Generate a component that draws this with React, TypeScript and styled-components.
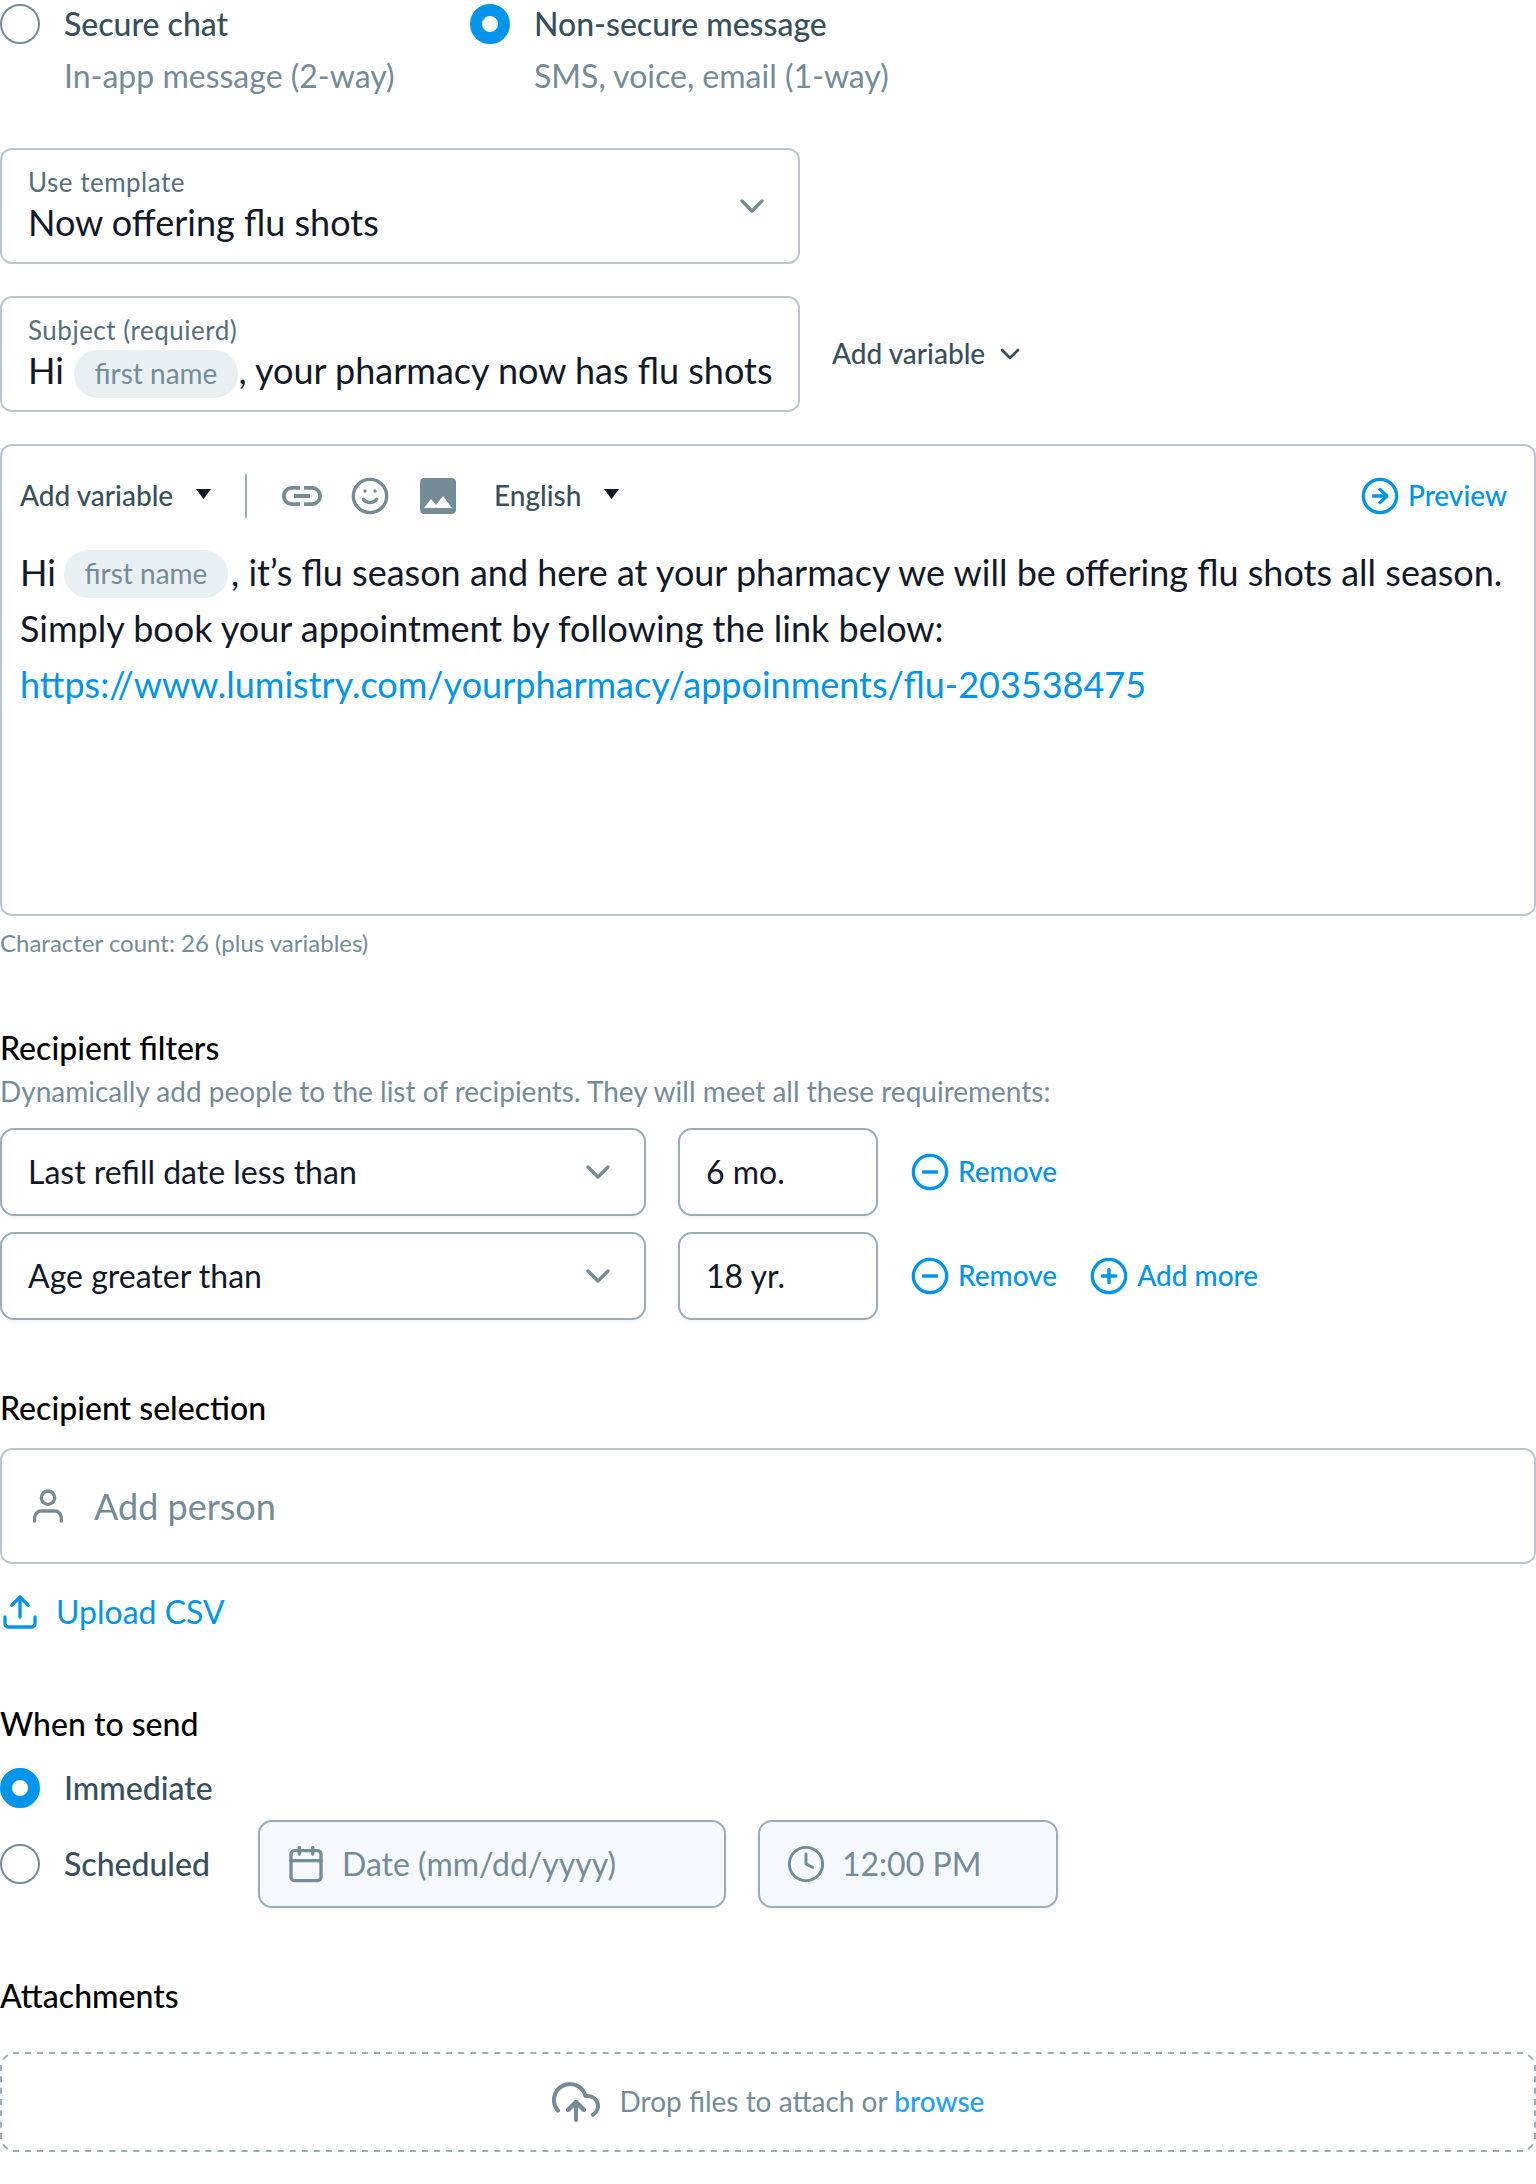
import React from "react";
import styled, { createGlobalStyle } from "styled-components";
import {
  FiArrowRightCircle,
  FiCalendar,
  FiChevronDown,
  FiClock,
  FiMinusCircle,
  FiPlusCircle,
  FiSmile,
  FiUpload,
  FiUploadCloud,
  FiUser,
} from "react-icons/fi";

const color = {
  blue: "#0094eb",
  browse: "#23a0f5",
  ink: "#111827",
  dark: "#37505c",
  label: "#546e7a",
  muted: "#748b98",
  line: "#bac7ce",
  lineStrong: "#9aaeba",
  pill: "#e8f0f4",
  disabled: "#f5f8fd",
};

const GlobalStyle = createGlobalStyle`
  *, *::before, *::after { box-sizing: border-box; }
  body {
    margin: 0;
    background: #fff;
    color: ${color.ink};
    font-family: Lato, "Liberation Sans", sans-serif;
    font-size: 32px;
    line-height: 48px;
  }
  svg { display: block; flex: none; }
`;

const Form = styled.main`
  display: flex;
  flex-direction: column;
  width: 1536px;
`;

const Stack = styled.div<{ $gap: number; $top?: number }>`
  display: flex;
  flex-direction: column;
  gap: ${(p) => p.$gap}px;
  margin-top: ${(p) => p.$top ?? 0}px;
`;

const Row = styled.div<{ $gap: number }>`
  display: flex;
  align-items: center;
  gap: ${(p) => p.$gap}px;
`;

const TypeChoices = styled.div`
  display: grid;
  grid-template-columns: 470px 1fr;
`;

const RadioRow = styled.label`
  display: grid;
  grid-template-columns: 40px auto;
  column-gap: 24px;
  row-gap: 4px;
  align-items: center;
  justify-content: start;
`;

const RadioDot = styled.span<{ $checked?: boolean }>`
  width: 40px;
  height: 40px;
  border-radius: 50%;
  border: ${(p) => (p.$checked ? `12px solid ${color.blue}` : `2px solid ${color.muted}`)};
  background: #fff;
`;

const RadioLabel = styled.span`
  color: ${color.dark};
  font-weight: 500;
  white-space: nowrap;
`;

const RadioHint = styled.span`
  grid-column: 2;
  color: ${color.muted};
  white-space: nowrap;
`;

const Field = styled.div`
  display: flex;
  align-items: center;
  justify-content: space-between;
  width: 800px;
  height: 116px;
  padding: 0 26px;
  border: 2px solid ${color.line};
  border-radius: 12px;
`;

const FieldText = styled.div`
  display: flex;
  flex-direction: column;
  padding-top: 4px;
`;

const FieldLabel = styled.span`
  color: ${color.label};
  font-size: 26px;
  line-height: 28px;
  letter-spacing: 0.5px;
`;

const FieldValue = styled.span`
  display: flex;
  align-items: center;
  height: 52px;
  font-size: 36px;
  line-height: 52px;
  white-space: pre;
`;

const Greeting = styled.span<{ $width: number }>`
  width: ${(p) => p.$width}px;
`;

const Pill = styled.span<{ $drop: number; $after: number }>`
  display: inline-flex;
  justify-content: center;
  width: 164px;
  height: 48px;
  margin: ${(p) => p.$drop * 2}px ${(p) => p.$after}px 0 0;
  padding-top: 4px;
  border-radius: 24px;
  background: ${color.pill};
  color: ${color.muted};
  font-size: 28px;
  line-height: 38px;
`;

const Chevron = styled(FiChevronDown)<{ $size?: number; $tone?: string }>`
  width: ${(p) => p.$size ?? 40}px;
  height: ${(p) => p.$size ?? 40}px;
  color: ${(p) => p.$tone ?? color.muted};
`;

const VariableButton = styled.span`
  display: flex;
  align-items: center;
  gap: 9px;
  color: ${color.dark};
  font-size: 28px;
  font-weight: 500;
  line-height: 38px;
`;

const ControlText = styled.span`
  padding-bottom: 2px;
`;

const Editor = styled.div`
  height: 472px;
  padding: 28px 18px 0;
  border: 2px solid ${color.line};
  border-radius: 12px;
`;

const Toolbar = styled.div`
  display: flex;
  align-items: center;
  height: 44px;
  padding-right: 9px;
`;

const ToolMenu = styled.span<{ $width: number }>`
  display: flex;
  align-items: center;
  justify-content: space-between;
  width: ${(p) => p.$width}px;
  color: ${color.dark};
  font-size: 28px;
  font-weight: 500;
  line-height: 38px;
`;

const Caret = styled.i`
  width: 15px;
  height: 10px;
  margin-bottom: 4px;
  background: ${color.ink};
  clip-path: polygon(0 0, 100% 0, 50% 100%);
`;

const Divider = styled.i`
  width: 2px;
  height: 44px;
  margin: 0 31px 0 34px;
  background: ${color.lineStrong};
`;

const ToolIcons = styled.span`
  display: flex;
  align-items: center;
  gap: 24px;
  margin-right: 32px;
  color: ${color.muted};
`;

const TextLink = styled.a`
  display: flex;
  align-items: center;
  gap: 8px;
  color: ${color.blue};
  font-size: 28px;
  font-weight: 500;
  line-height: 38px;
`;

const UploadLink = styled.a`
  display: flex;
  align-items: center;
  gap: 16px;
  color: ${color.blue};
`;

const PushRight = styled.span`
  margin-left: auto;
`;

const Message = styled.div`
  margin-top: 26px;
  font-size: 36px;
  line-height: 56px;
`;

const MessageLine = styled.div`
  display: flex;
  align-items: center;
  height: 56px;
  white-space: pre;
`;

const MessageUrl = styled.a`
  display: block;
  color: ${color.blue};
`;

const CharCount = styled.p`
  margin: 11px 0 0;
  color: ${color.muted};
  font-size: 24px;
  line-height: 32px;
`;

const Section = styled.section<{ $top: number }>`
  margin-top: ${(p) => p.$top}px;
`;

const Heading = styled.h2`
  margin: 0;
  color: #000;
  font-size: 32px;
  font-weight: 500;
  line-height: 48px;
`;

const Description = styled.p`
  margin: 0;
  padding-bottom: 2px;
  color: ${color.muted};
  font-size: 28px;
  line-height: 38px;
`;

const InputBox = styled.div<{ $width: number; $disabled?: boolean }>`
  display: flex;
  align-items: center;
  justify-content: ${(p) => (p.$disabled ? "flex-start" : "space-between")};
  gap: 16px;
  width: ${(p) => p.$width}px;
  height: 88px;
  padding: 0 26px;
  border: 2px solid ${color.lineStrong};
  border-radius: 14px;
  background: ${(p) => (p.$disabled ? color.disabled : "#fff")};
  color: ${(p) => (p.$disabled ? color.muted : color.ink)};
  box-shadow: 0 2px 4px rgba(0, 0, 0, 0.05);
`;

const PersonField = styled.div`
  display: flex;
  align-items: center;
  gap: 26px;
  height: 116px;
  margin: 16px 0 24px;
  padding: 0 26px;
  border: 2px solid ${color.line};
  border-radius: 12px;
  color: ${color.muted};
  font-size: 36px;
  line-height: 56px;
`;

const ScheduleRow = styled.div`
  display: flex;
  align-items: center;
  margin-top: 8px;
`;

const ScheduleChoice = styled.div`
  width: 258px;
`;

const DropZone = styled.div`
  position: relative;
  display: flex;
  align-items: center;
  justify-content: center;
  gap: 20px;
  height: 100px;
  margin-top: 32px;
  color: ${color.muted};
  font-size: 28px;
  line-height: 38px;
`;

const DashedOutline = styled.svg`
  position: absolute;
  inset: 0;
  fill: none;
  stroke: ${color.lineStrong};
  stroke-width: 2px;
`;

const Browse = styled.a`
  color: ${color.browse};
  font-weight: 500;
`;

const LinkIcon = () => (
  <svg width="48" height="48" viewBox="0 0 24 24" fill="currentColor">
    <path d="M3.9 12c0-1.71 1.39-3.1 3.1-3.1h4V7H7c-2.76 0-5 2.24-5 5s2.24 5 5 5h4v-1.9H7c-1.71 0-3.1-1.39-3.1-3.1zM8 13h8v-2H8v2zm9-6h-4v1.9h4c1.71 0 3.1 1.39 3.1 3.1s-1.39 3.1-3.1 3.1h-4V17h4c2.76 0 5-2.24 5-5s-2.24-5-5-5z" />
  </svg>
);

const PhotoIcon = () => (
  <svg width="48" height="48" viewBox="0 0 24 24" fill="currentColor">
    <path d="M21 19V5c0-1.1-.9-2-2-2H5c-1.1 0-2 .9-2 2v14c0 1.1.9 2 2 2h14c1.1 0 2-.9 2-2zM8.5 13.5l2.5 3.01L14.5 12l4.5 6H5l3.5-4.5z" />
  </svg>
);

const Dashes = () => (
  <DashedOutline width="1536" height="100" viewBox="0 0 1536 100">
    <path d="M13 1H1523M13 99H1523" strokeDasharray="6 6.032" />
    <path d="M1 13V87M1535 13V87" strokeDasharray="6 5.333" />
    <path d="M3.2 7.8A12 12 0 0 1 7.8 3.2M1528.2 3.2A12 12 0 0 1 1532.8 7.8M1532.8 92.2A12 12 0 0 1 1528.2 96.8M7.8 96.8A12 12 0 0 1 3.2 92.2" />
  </DashedOutline>
);

function Radio({ label, hint, checked }: { label: string; hint?: string; checked?: boolean }) {
  return (
    <RadioRow>
      <RadioDot $checked={checked} />
      <RadioLabel>{label}</RadioLabel>
      {hint && <RadioHint>{hint}</RadioHint>}
    </RadioRow>
  );
}

function Filter({ name, value, last }: { name: string; value: string; last?: boolean }) {
  return (
    <Row $gap={32}>
      <InputBox $width={646}>
        {name}
        <Chevron />
      </InputBox>
      <InputBox $width={200}>{value}</InputBox>
      <TextLink>
        <FiMinusCircle size={40} />
        <ControlText>Remove</ControlText>
      </TextLink>
      {last && (
        <TextLink>
          <FiPlusCircle size={40} />
          <ControlText>Add more</ControlText>
        </TextLink>
      )}
    </Row>
  );
}

export default function App() {
  return (
    <>
      <GlobalStyle />
      <Form>
        <TypeChoices>
          <Radio label="Secure chat" hint="In-app message (2-way)" />
          <Radio label="Non-secure message" hint="SMS, voice, email (1-way)" checked />
        </TypeChoices>

        <Stack $gap={32} $top={48}>
          <Field>
            <FieldText>
              <FieldLabel>Use template</FieldLabel>
              <FieldValue>Now offering flu shots</FieldValue>
            </FieldText>
            <Chevron />
          </Field>
          <Row $gap={32}>
            <Field>
              <FieldText>
                <FieldLabel>Subject (requierd)</FieldLabel>
                <FieldValue>
                  <Greeting $width={46}>Hi</Greeting>
                  <Pill $drop={4} $after={0.5}>first name</Pill>, your pharmacy now has flu shots
                </FieldValue>
              </FieldText>
            </Field>
            <VariableButton>
              <ControlText>Add variable</ControlText>
              <Chevron $size={32} $tone={color.dark} />
            </VariableButton>
          </Row>
          <Editor>
            <Toolbar>
              <ToolMenu $width={191}>
                <ControlText>Add variable</ControlText>
                <Caret />
              </ToolMenu>
              <Divider />
              <ToolIcons>
                <LinkIcon />
                <FiSmile size={40} />
                <PhotoIcon />
              </ToolIcons>
              <ToolMenu $width={125}>
                <ControlText>English</ControlText>
                <Caret />
              </ToolMenu>
              <PushRight>
                <TextLink>
                  <FiArrowRightCircle size={40} />
                  <ControlText>Preview</ControlText>
                </TextLink>
              </PushRight>
            </Toolbar>
            <Message>
              <MessageLine>
                <Greeting $width={44}>Hi</Greeting>
                <Pill $drop={2} $after={3}>first name</Pill>, it’s flu season and here at your pharmacy we will be offering flu shots all season.
              </MessageLine>
              <MessageLine>Simply book your appointment by following the link below:</MessageLine>
              <MessageUrl>https://www.lumistry.com/yourpharmacy/appoinments/flu-203538475</MessageUrl>
            </Message>
          </Editor>
        </Stack>
        <CharCount>Character count: 26 (plus variables)</CharCount>

        <Section $top={65}>
          <Heading>Recipient filters</Heading>
          <Description>Dynamically add people to the list of recipients. They will meet all these requirements:</Description>
          <Stack $gap={16} $top={16}>
            <Filter name="Last refill date less than" value="6 mo." />
            <Filter name="Age greater than" value="18 yr." last />
          </Stack>
        </Section>

        <Section $top={64}>
          <Heading>Recipient selection</Heading>
          <PersonField>
            <FiUser size={40} />
            Add person
          </PersonField>
          <UploadLink>
            <FiUpload size={40} />
            Upload CSV
          </UploadLink>
        </Section>

        <Section $top={64}>
          <Heading>When to send</Heading>
          <Stack $gap={0} $top={16}>
            <Radio label="Immediate" checked />
            <ScheduleRow>
              <ScheduleChoice>
                <Radio label="Scheduled" />
              </ScheduleChoice>
              <Row $gap={32}>
                <InputBox $width={468} $disabled>
                  <FiCalendar size={40} />
                  Date (mm/dd/yyyy)
                </InputBox>
                <InputBox $width={300} $disabled>
                  <FiClock size={40} strokeWidth={1.75} />
                  12:00 PM
                </InputBox>
              </Row>
            </ScheduleRow>
          </Stack>
        </Section>

        <Section $top={64}>
          <Heading>Attachments</Heading>
          <DropZone>
            <Dashes />
            <FiUploadCloud size={48} />
            <ControlText>
              Drop files to attach or <Browse>browse</Browse>
            </ControlText>
          </DropZone>
        </Section>
      </Form>
    </>
  );
}
